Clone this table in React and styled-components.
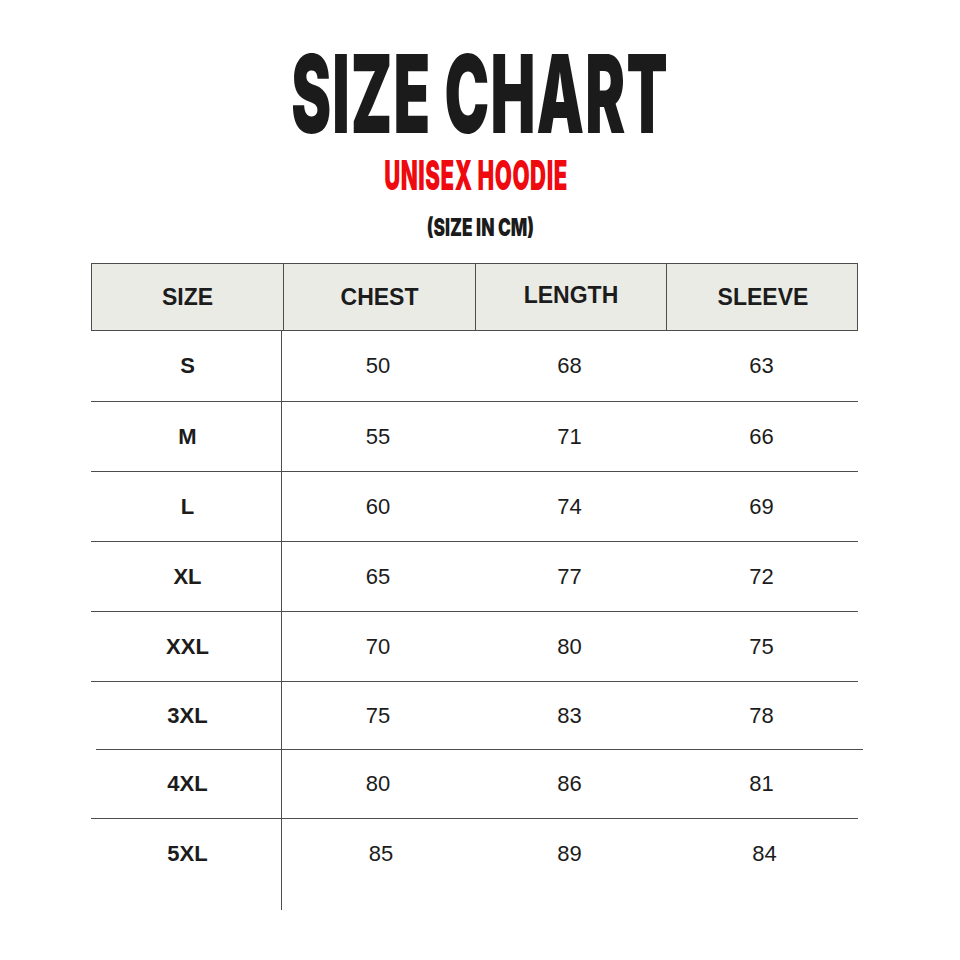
import React from "react";
import styled, { createGlobalStyle } from "styled-components";

const Global = createGlobalStyle`
  html, body { margin: 0; padding: 0; background: #ffffff; }
  body { font-family: "Liberation Sans", Arial, sans-serif; color: #1a1a1a; }
`;

const Page = styled.div`
  width: 960px;
  height: 960px;
  display: flex;
  flex-direction: column;
  background: #fff;
`;

const Heading = styled.header`
  display: flex;
  flex-direction: column;
  align-items: center;
`;

const Condensed = styled.div`
  font-family: Inter, "Liberation Sans", sans-serif;
  font-weight: 900;
  text-transform: uppercase;
  white-space: nowrap;
  transform: scaleX(${(p) => p.$sx});
  color: ${(p) => p.$color || "#1b1b1b"};
  font-size: ${(p) => p.$size}px;
  line-height: ${(p) => p.$lh}px;
  letter-spacing: ${(p) => p.$ls || 0}px;
  margin-top: ${(p) => p.$mt || 0}px;
  margin-left: ${(p) => p.$ml || 0}px;
`;

const Table = styled.div`
  margin-left: 91px;
  margin-top: ${(p) => p.$mt}px;
  width: 767px;
  display: flex;
  flex-direction: column;
`;

const cols = "191px 192px 191px 193px";

const HeadRow = styled.div`
  display: grid;
  grid-template-columns: ${cols};
  height: 68px;
  box-sizing: border-box;
  border: 1px solid #4d4d4d;
  background: #ebebe6;
`;

const HeadCell = styled.div`
  display: flex;
  align-items: center;
  justify-content: center;
  font-weight: 700;
  font-size: 23px;
  color: #1c1c1c;
  border-left: ${(p) => (p.$first ? "none" : "1px solid #4d4d4d")};
  padding-bottom: ${(p) => p.$lift || 0}px;
`;

const Row = styled.div`
  display: grid;
  grid-template-columns: ${cols};
  height: ${(p) => p.$h}px;
`;

const Cell = styled.div`
  display: flex;
  align-items: center;
  justify-content: center;
  font-size: 22px;
  font-weight: ${(p) => (p.$bold ? 700 : 400)};
  color: #1c1c1c;
  border-right: ${(p) => (p.$divider ? "1px solid #4d4d4d" : "none")};
  padding-left: ${(p) => p.$nudge || 0}px;
`;

const Rule = styled.div`
  height: 1px;
  background: #4d4d4d;
  margin-left: ${(p) => p.$shift || 0}px;
  margin-right: ${(p) => -(p.$shift || 0)}px;
`;

const Tail = styled.div`
  display: grid;
  grid-template-columns: ${cols};
  height: 22px;
`;

const TailCell = styled.div`
  border-right: ${(p) => (p.$divider ? "1px solid #4d4d4d" : "none")};
`;

const rows = [
  ["S", 50, 68, 63, 70],
  ["M", 55, 71, 66, 69],
  ["L", 60, 74, 69, 69],
  ["XL", 65, 77, 72, 69],
  ["XXL", 70, 80, 75, 69],
  ["3XL", 75, 83, 78, 67],
  ["4XL", 80, 86, 81, 68],
  ["5XL", 85, 89, 84, 69],
];

export default function App() {
  return (
    <Page>
      <Global />
      <Heading>
        <Condensed $size={108} $lh={96} $sx={0.555} $mt={46} $ls={2}>
          Size Chart
        </Condensed>
        <Condensed $size={41} $lh={40} $sx={0.54} $mt={13} $color="#ee0a0f" $ml={-8} $ls={1}>
          Unisex Hoodie
        </Condensed>
        <Condensed $size={24} $lh={24} $sx={0.72} $mt={21}>
          (Size in cm)
        </Condensed>
      </Heading>
      <Table $mt={23}>
        <HeadRow>
          <HeadCell $first>SIZE</HeadCell>
          <HeadCell>CHEST</HeadCell>
          <HeadCell $lift={4}>LENGTH</HeadCell>
          <HeadCell>SLEEVE</HeadCell>
        </HeadRow>
        {rows.map((r, i) => (
          <React.Fragment key={r[0]}>
            <Row $h={r[4]}>
              <Cell $bold $divider $nudge={3}>{r[0]}</Cell>
              <Cell $nudge={i === 7 ? 6 : 0}>{r[1]}</Cell>
              <Cell>{r[2]}</Cell>
              <Cell $nudge={i === 7 ? 6 : 0}>{r[3]}</Cell>
            </Row>
            {i < rows.length - 1 && <Rule $shift={i === 5 ? 5 : 0} />}
          </React.Fragment>
        ))}
        <Tail>
          <TailCell $divider />
        </Tail>
      </Table>
    </Page>
  );
}
